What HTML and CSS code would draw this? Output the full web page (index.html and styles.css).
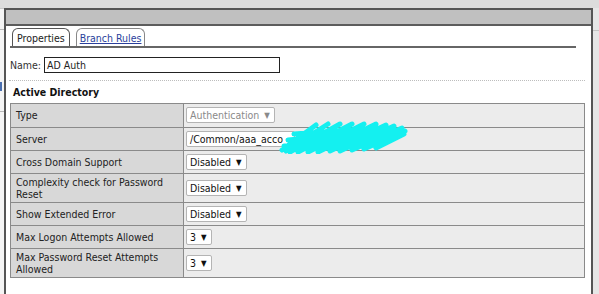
FILE: index.html
```html
<!DOCTYPE html>
<html lang="en">
<head>
  <meta charset="UTF-8" />
  <title>AD Auth - Properties</title>
  <link rel="stylesheet" href="styles.css">
</head>
<body>
  <div class="screen">
    <!-- page behind the dialog -->
    <div class="behind behind-left">
      <span class="peek-line"></span>
      <span class="peek-link"></span>
      <span class="peek-line"></span>
    </div>

    <div class="dialog">
      <div class="titlebar"></div>

      <div class="dialog-body">
        <!-- Tabs -->
        <div class="tabs">
          <div class="tab active">Properties</div>
          <div class="tab"><a href="#">Branch Rules</a></div>
        </div>

        <div class="name-row">
          <label>Name:</label>
          <span class="text-input">AD Auth</span>
        </div>

        <h2>Active Directory</h2>

        <table class="props">
          <tr class="first">
            <td class="label">Type</td>
            <td class="value"><span class="select disabled">Authentication <i>&#9660;</i></span></td>
          </tr>
          <tr>
            <td class="label">Server</td>
            <td class="value"><span class="select server">/Common/aaa_acco</span></td>
          </tr>
          <tr>
            <td class="label">Cross Domain Support</td>
            <td class="value"><span class="select">Disabled <i>&#9660;</i></span></td>
          </tr>
          <tr class="tall">
            <td class="label">Complexity check for Password Reset</td>
            <td class="value"><span class="select">Disabled <i>&#9660;</i></span></td>
          </tr>
          <tr>
            <td class="label">Show Extended Error</td>
            <td class="value"><span class="select">Disabled <i>&#9660;</i></span></td>
          </tr>
          <tr>
            <td class="label">Max Logon Attempts Allowed</td>
            <td class="value"><span class="select">3 <i>&#9660;</i></span></td>
          </tr>
          <tr class="tall">
            <td class="label">Max Password Reset Attempts Allowed</td>
            <td class="value"><span class="select">3 <i>&#9660;</i></span></td>
          </tr>
        </table>
      </div>

      <!-- redaction scribble over the server name -->
      <svg class="scribble" width="130" height="34" viewBox="0 0 130 34">
        <path d="M4 30 L38 5 M8 31 L50 4 M12 32 L62 4 M20 32 L74 4 M30 32 L86 4 M40 32 L98 4 M52 31 L108 5 M62 31 L116 6 M74 30 L124 8 M86 29 L127 11 M98 28 L126 14 M6 26 L122 16 M10 20 L118 10 M16 14 L100 8"
              fill="none" stroke="#14f0f0" stroke-width="5" stroke-linecap="round"/>
      </svg>
    </div>

    <div class="behind behind-right">
      <span class="peek-bar"></span>
    </div>
  </div>
</body>
</html>
```

FILE: styles.css
```css
/* ---------- Page ---------- */
body {
  margin: 0;
  background: #dcdcdc;
  font-family: "DejaVu Sans Condensed", "DejaVu Sans", sans-serif;
  font-size: 10.5px;
  color: #222;
  height: 294px;
  overflow: hidden;
}

.screen {
  display: flex;
  padding-top: 8px;
  height: 286px;
}

/* ---------- Bits of the page behind the dialog ---------- */
.behind { flex: none; display: flex; flex-direction: column; }
.behind-left {
  width: 4px;
  background: #f4f4f4;
  border-top: 1px solid #c8c8c8;
}
.peek-line { display: block; height: 1px; background: #b8b8b8; margin-top: 20px; }
.peek-link { display: block; height: 9px; width: 2px; background: #4a6fb0; margin-top: 52px; }
.behind-right {
  flex: 1;
  background: #e6e6e6;
  padding-top: 22px;
}
.peek-bar { display: block; height: 1px; background: #c4c4c4; }

/* ---------- Dialog ---------- */
.dialog {
  position: relative;
  flex: none;
  width: 585px;
  background: #fff;
  border: 2px solid #555;
  border-bottom: none;
}

.titlebar {
  height: 14px;
  background: #c0c0c0;
  border-bottom: 2px solid #5c5c5c;
}

.dialog-body { padding: 2px 6px 0 4px; }

/* ---------- Tabs ---------- */
.tabs {
  display: flex;
  gap: 6px;
  padding-left: 2px;
  margin-right: 9px;
  border-bottom: 2px solid #666;
}
.tab {
  height: 17px;
  line-height: 18px;
  padding: 0 3px;
  border: 1px solid #888;
  border-bottom: none;
  border-radius: 6px 6px 0 0;
  background: #fff;
}
.tab.active { border-color: #555; padding: 0 4px; }
.tab a { color: #2a3f9c; text-decoration: underline; }

/* ---------- Name row ---------- */
.name-row {
  display: flex;
  align-items: center;
  gap: 3px;
  margin-top: 9px;
  padding-bottom: 7px;
  border-bottom: 1px dotted #bdbdbd;
  margin-left: -1px;
  padding-left: 1px;
}
.name-row label { color: #333; }
.text-input {
  width: 230px;
  height: 14px;
  line-height: 14px;
  padding: 0 2px;
  border: 1px solid #222;
}

h2 {
  margin: 0;
  padding-left: 3px;
  font-size: 10.5px;
  line-height: 22px;
  font-weight: bold;
  color: #111;
}

/* ---------- Property table ---------- */
.props {
  width: 575px;
  border-collapse: collapse;
  border: 1px solid #8a8a8a;
}
.props td {
  border: 1px solid #8a8a8a;
  border-left: none;
  padding: 3px 4px;
  vertical-align: middle;
}
.props .label {
  width: 163px;
  background: #d8d8d8;
  line-height: 12px;
  padding-left: 5px;
  border-right: 1px solid #8a8a8a;
}
.props .value {
  background: #ececec;
  padding-left: 2px;
}
.props tr.first td { padding-bottom: 4px; }
.props tr.tall td { padding-top: 2px; padding-bottom: 2px; }

.select {
  display: inline-block;
  height: 14px;
  line-height: 14px;
  padding: 0 4px 0 3px;
  background: #fff;
  border: 1px solid #b4b4b4;
  border-radius: 2px;
  color: #111;
}
.select i { font-style: normal; font-size: 8px; margin-left: 2px; vertical-align: 1px; }
.select.disabled { color: #8a8a8a; }
.select.server { width: 100px; }

/* ---------- Redaction ---------- */
.scribble {
  position: absolute;
  left: 272px;
  top: 110px;
}
```
